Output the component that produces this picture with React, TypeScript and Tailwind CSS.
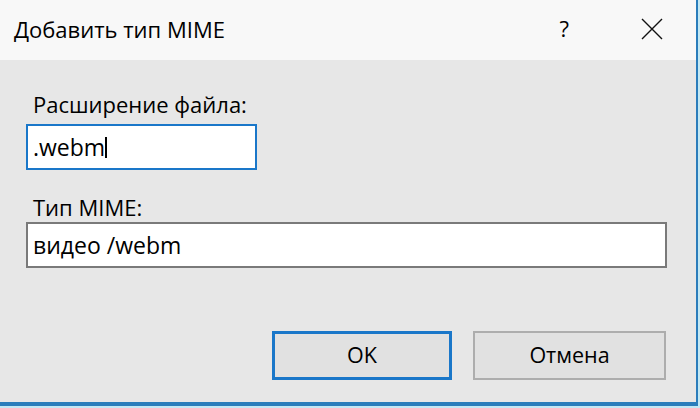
import { useState } from 'react'

const font = { fontFamily: '"Open Sans", "Noto Sans", sans-serif' }

export default function App() {
  const [mime, setMime] = useState('видео /webm')
  const ext = '.webm'

  return (
    <div className="w-[700px] h-[408px] flex flex-col text-black" style={font}>
      <div className="flex-1 flex flex-col border-r-[2px] border-b-[2px] border-[#c3e8f4]">
        <div className="flex-1 flex flex-col border-r-[2px] border-b-[4px] border-r-[#2a7dbb] border-b-[#2a7dbb]">
          {/* title bar */}
          <div className="h-[60px] bg-[#f8f8f8] flex items-center pl-[14px] pb-[2px]">
            <span className="text-[22px] leading-none flex-1">Добавить тип MIME</span>
            <span className="text-[22px] leading-none mr-[72px] mt-[-2px]">?</span>
            <svg width="22" height="22" viewBox="0 0 22 22" className="mr-[33px]">
              <path d="M1 1 L21 21 M21 1 L1 21" stroke="#111" strokeWidth="1.4" fill="none" />
            </svg>
          </div>

          {/* body */}
          <div className="flex-1 bg-[#e7e7e7] flex flex-col pl-[26px] pr-[30px]">
            <label className="mt-[30px] ml-[7px] text-[22px] leading-[28px]">Расширение файла:</label>
            <div className="mt-[6px] w-[231px] h-[46px] bg-white border-[2px] border-[#1a77c9] flex items-center pl-[5px]">
              <span className="text-[23px] leading-none">{ext}</span>
              <span className="w-[2px] h-[21px] bg-black mt-[1px]" />
            </div>

            <label className="mt-[23px] ml-[7px] text-[22px] leading-[28px]">Тип MIME:</label>
            <div className="mt-[1px] w-[641px] h-[46px] bg-white border-[2px] border-[#7a7a7a] flex items-center pl-[5px]">
              <input
                value={mime}
                onChange={e => setMime(e.target.value)}
                className="w-full text-[23px] outline-none bg-transparent"
                style={font}
              />
            </div>

            <div className="mt-[63px] flex justify-end gap-[21px]">
              <button className="w-[180px] h-[49px] bg-[#e1e1e1] border-[3px] border-[#1a77c9] text-[21.5px]" style={font}>
                OK
              </button>
              <button className="w-[193px] h-[49px] bg-[#e1e1e1] border-[2px] border-[#adadad] text-[21.5px]" style={font}>
                Отмена
              </button>
            </div>
          </div>
        </div>
      </div>
    </div>
  )
}
